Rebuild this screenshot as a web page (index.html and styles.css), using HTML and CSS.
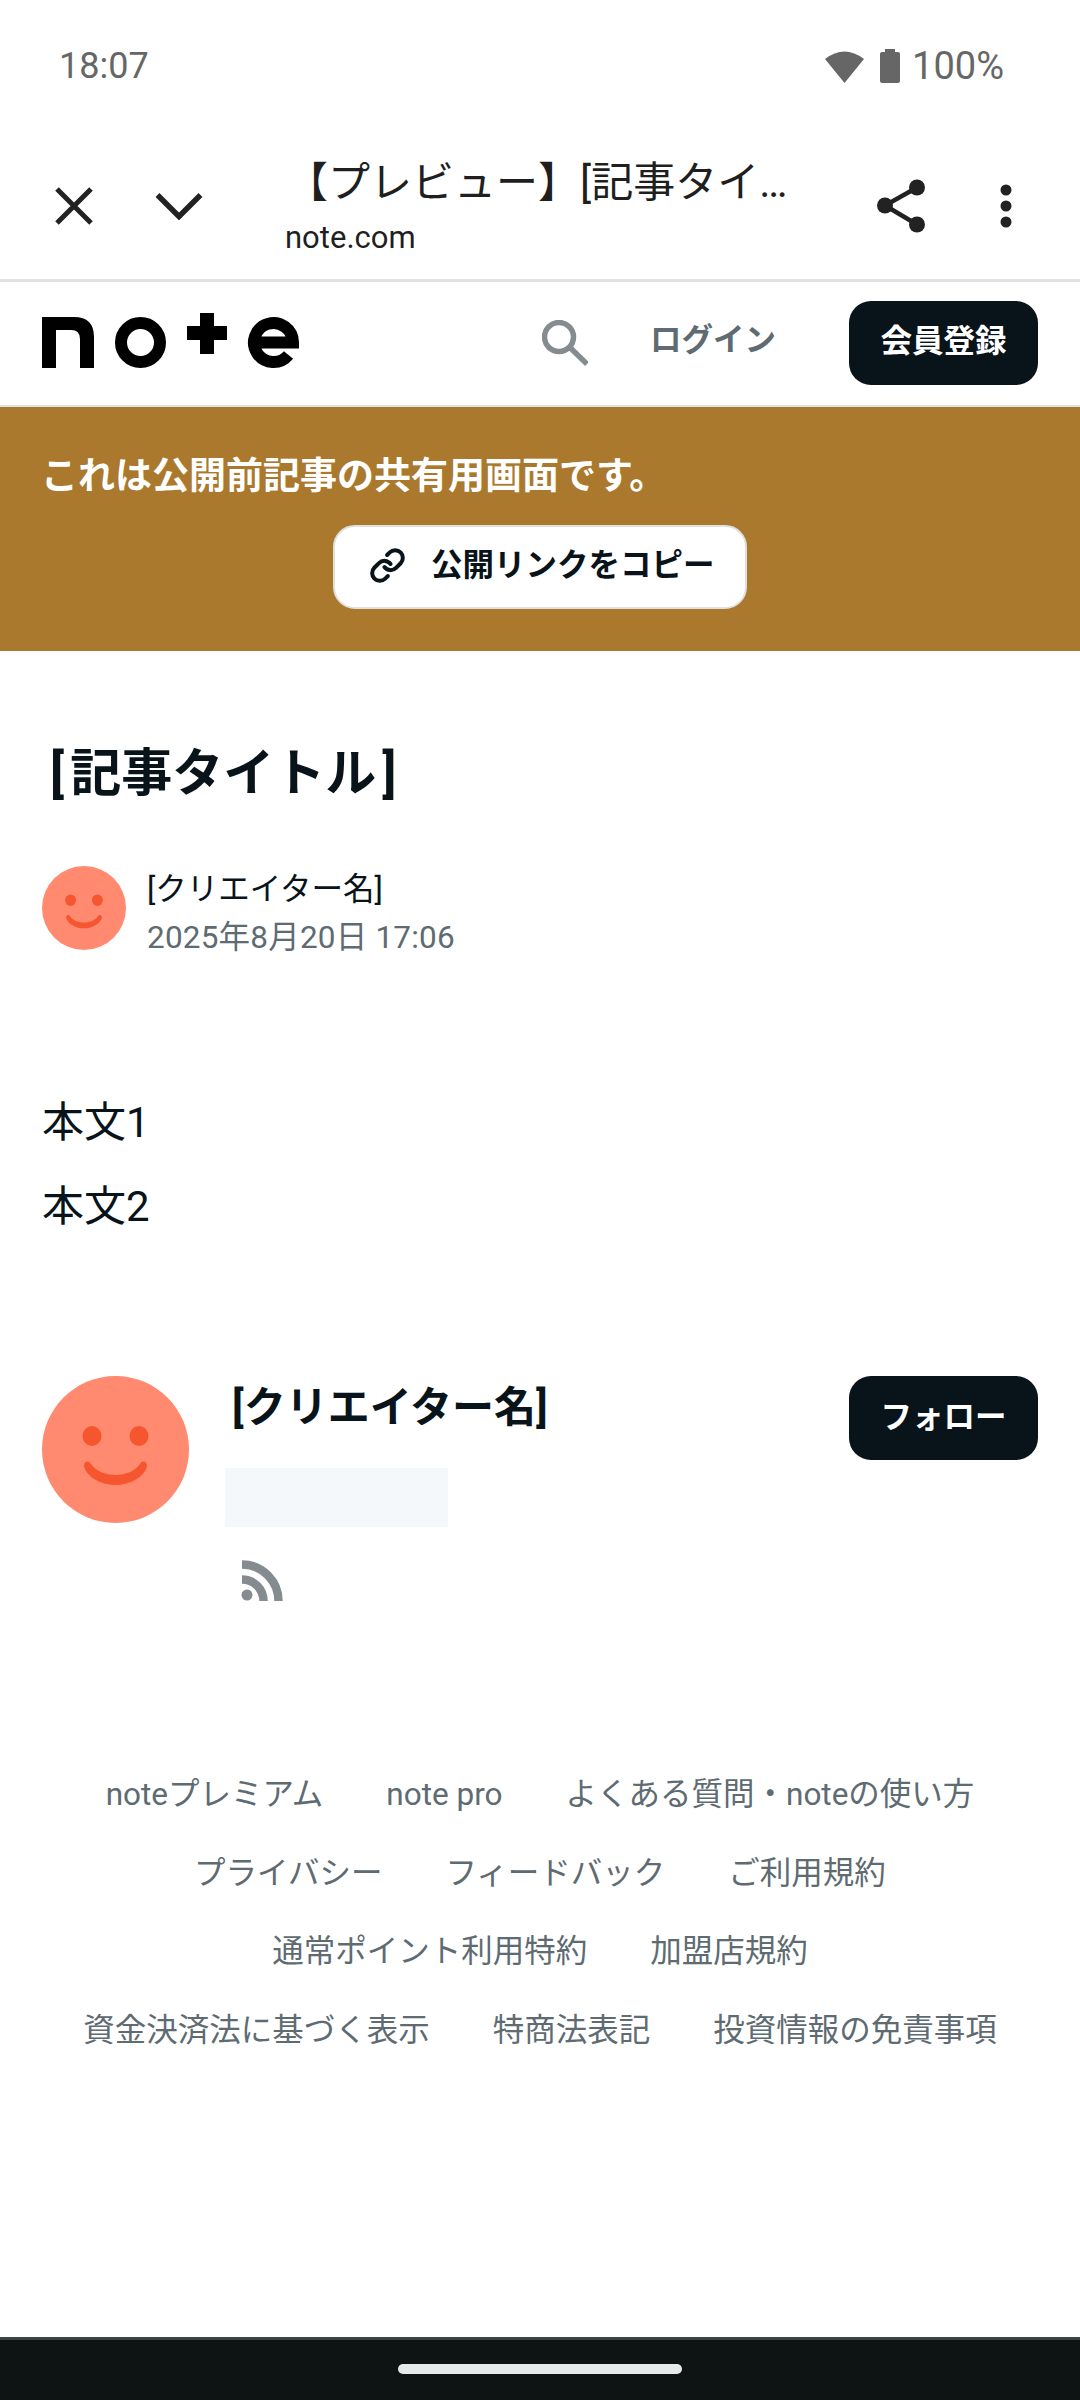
FILE: index.html
```html
<!DOCTYPE html>
<html lang="ja">
<head>
  <meta charset="UTF-8">
  <meta name="viewport" content="width=device-width, initial-scale=1.0">
  <title>【プレビュー】[記事タイトル]</title>
  <link rel="stylesheet" href="styles.css">
</head>
<body>
  <div class="status-bar">
    <span class="status-time">18:07</span>
    <div class="status-icons">
      <svg class="wifi-icon" viewBox="0 0 39 33"><path d="M0 9Q19.500-6 39 9L19.500 33Z"/></svg>
      <svg class="battery-icon" viewBox="0 0 20 34"><path d="M5 0h10v3h3a2 2 0 0 1 2 2v27a2 2 0 0 1-2 2H2a2 2 0 0 1-2-2V5a2 2 0 0 1 2-2h3Z"/></svg>
      <span class="status-battery">100%</span>
    </div>
  </div>

  <div class="browser-bar">
    <svg class="close-icon" viewBox="0 0 40 40"><path d="M3 3 37 37M37 3 3 37"/></svg>
    <svg class="chevron-icon" viewBox="0 0 48 28"><path d="M2.500 3 24 24.500 45.500 3"/></svg>
    <div class="browser-title">
      <div class="page-title">【プレビュー】[記事タイ…</div>
      <div class="page-host">note.com</div>
    </div>
    <svg class="share-icon" viewBox="0 0 48 56">
      <path d="M40 9.500 8 27.500 40 46.500"/>
      <circle cx="40" cy="9.500" r="8"/>
      <circle cx="8" cy="27.500" r="8"/>
      <circle cx="40" cy="46.500" r="8"/>
    </svg>
    <svg class="more-icon" viewBox="0 0 14 46">
      <circle cx="7" cy="7" r="5.500"/>
      <circle cx="7" cy="23" r="5.500"/>
      <circle cx="7" cy="39" r="5.500"/>
    </svg>
  </div>

  <header class="site-header">
    <svg class="logo" viewBox="0 0 258 56">
      <path d="M0 4h32q20 0 20 20v31H38V26q0-9-9-9H14v38H0Z"/>
      <circle class="logo-stroke" cx="98.500" cy="29.500" r="19.500"/>
      <path d="M158 0h14v13h13v14h-13v14h-14V27h-13V13h13Z"/>
      <path class="logo-stroke" d="M212 29.500H251A19.500 19.500 0 1 0 246.500 42"/>
    </svg>
    <svg class="search-icon" viewBox="0 0 46 46"><circle cx="17" cy="17" r="14.500"/><path d="M28.500 28 45 44"/></svg>
    <span class="login-link">ログイン</span>
    <button class="dark-button signup-button">会員登録</button>
  </header>

  <div class="preview-banner">
    <p class="banner-text">これは公開前記事の共有用画面です。</p>
    <button class="copy-button">
      <svg class="link-icon" viewBox="0 0 24 24">
        <path d="M10 13a5 5 0 0 0 7.540.540l3-3a5 5 0 0 0-7.070-7.070l-1.720 1.710"/>
        <path d="M14 11a5 5 0 0 0-7.540-.540l-3 3a5 5 0 0 0 7.070 7.070l1.710-1.710"/>
      </svg>
      <span class="copy-label">公開リンクをコピー</span>
    </button>
  </div>

  <main class="article">
    <h1 class="article-title"><span class="title-open">[</span>記事タイトル<span class="title-close">]</span></h1>

    <div class="byline">
      <svg class="avatar-small" viewBox="0 0 147 147">
        <circle class="face" cx="73.500" cy="73.500" r="73.500"/>
        <ellipse class="feature" cx="50" cy="60" rx="9.500" ry="10"/>
        <ellipse class="feature" cx="97" cy="60" rx="9.500" ry="10"/>
        <path class="feature" d="M42 90C44 100 58 109 73.500 109C89 109 103 100 105 90C105 85 100 84 98 88C93 95 84 99 73.500 99C63 99 54 95 49 88C47 84 42 85 42 90Z"/>
      </svg>
      <div class="byline-text">
        <div class="byline-name">[クリエイター名]</div>
        <div class="byline-date">2025年8月20日 17:06</div>
      </div>
    </div>

    <div class="article-body">
      <p>本文1</p>
      <p>本文2</p>
    </div>

    <div class="creator-card">
      <svg class="avatar-large" viewBox="0 0 147 147">
        <circle class="face" cx="73.500" cy="73.500" r="73.500"/>
        <ellipse class="feature" cx="50" cy="60" rx="9.500" ry="10"/>
        <ellipse class="feature" cx="97" cy="60" rx="9.500" ry="10"/>
        <path class="feature" d="M42 90C44 100 58 109 73.500 109C89 109 103 100 105 90C105 85 100 84 98 88C93 95 84 99 73.500 99C63 99 54 95 49 88C47 84 42 85 42 90Z"/>
      </svg>
      <div class="creator-info">
        <div class="creator-name">[クリエイター名]</div>
        <div class="creator-placeholder"></div>
        <svg class="rss-icon" viewBox="0 0 43 42">
          <circle class="rss-dot" cx="7" cy="35" r="5.500"/>
          <path d="M2 19.500A21.500 21.500 0 0 1 23.500 41"/>
          <path d="M2 4.500A36.500 36.500 0 0 1 38.500 41"/>
        </svg>
      </div>
      <button class="dark-button">フォロー</button>
    </div>

    <nav class="footer-links">
      <span>noteプレミアム</span>
      <span>note pro</span>
      <span>よくある質問・noteの使い方</span>
      <span>プライバシー</span>
      <span>フィードバック</span>
      <span>ご利用規約</span>
      <span>通常ポイント利用特約</span>
      <span>加盟店規約</span>
      <span>資金決済法に基づく表示</span>
      <span>特商法表記</span>
      <span>投資情報の免責事項</span>
    </nav>
  </main>

  <div class="nav-bar"><div class="home-pill"></div></div>
</body>
</html>
```

FILE: styles.css
```css
* { box-sizing: border-box; }
html, body { margin: 0; padding: 0; }
body { width: 1080px; height: 2400px; display: flex; flex-direction: column; overflow: hidden; background: #fff; color: #08131a; font-family: Roboto, "Noto Sans CJK JP", sans-serif; }
p, h1 { margin: 0; }
button { font-family: inherit; border: none; cursor: pointer; }

.status-bar { height: 132px; flex: none; display: flex; justify-content: space-between; align-items: center; padding: 0 76px 0 59px; color: #666; }
.status-time { font-size: 36px; line-height: 1; }
.status-battery { font-size: 38px; line-height: 1; }
.status-icons { display: flex; align-items: center; }
.wifi-icon { width: 39px; height: 33px; fill: #666; margin-right: 16px; }
.battery-icon { width: 20px; height: 34px; fill: #666; margin-right: 12px; }

.browser-bar { height: 150px; flex: none; display: flex; align-items: center; border-bottom: 3px solid #e2e2e2; }
.close-icon { width: 40px; height: 40px; margin-left: 54px; fill: none; stroke: #222; stroke-width: 5; }
.chevron-icon { width: 48px; height: 28px; margin-left: 61px; fill: none; stroke: #222; stroke-width: 5.500; }
.browser-title { width: 551px; margin: 3px 0 0 83px; }
.page-title { font-size: 42px; line-height: 60px; color: #1f1f1f; white-space: nowrap; }
.page-host { margin: 1px 0 0 -1px; font-size: 31px; line-height: 48px; color: #1f1f1f; }
.share-icon { width: 48px; height: 56px; margin-left: 40px; stroke: #222; stroke-width: 4.500; fill: none; }
.share-icon circle { fill: #222; stroke: none; }
.more-icon { width: 14px; height: 46px; margin-left: 74px; fill: #222; }

.site-header { height: 125px; flex: none; display: flex; align-items: center; padding: 0 42px 2px; border-bottom: 2px solid #e2e2e2; }
.logo { width: 258px; height: 56px; fill: #000; margin-top: -3px; }
.logo-stroke { fill: none; stroke: #000; stroke-width: 12; }
.search-icon { width: 46px; height: 46px; margin-left: 242px; fill: none; stroke: #858c90; stroke-width: 5.500; }
.login-link { margin-left: 62px; padding-bottom: 12px; font-size: 31.500px; font-weight: 700; color: #5e6b72; }
.dark-button { width: 189px; height: 84px; flex: none; margin-left: auto; padding: 0 0 9px; background: #08131a; color: #fff; border-radius: 22px; font-size: 31.500px; font-weight: 700; }
.signup-button { padding-bottom: 10px; }

.preview-banner { height: 244px; flex: none; background: #aa792d; padding: 46px 41px 0; display: flex; flex-direction: column; align-items: center; }
.banner-text { align-self: flex-start; padding-top: 2px; color: #fff; font-size: 37px; line-height: 44px; font-weight: 700; }
.copy-button { display: flex; align-items: center; gap: 25px; width: 414px; height: 84px; margin-top: 26px; padding: 0 0 0 34px; background: #fff; border: 2px solid #e0e0e0; border-radius: 22px; color: #08131a; font-size: 31.500px; font-weight: 700; }
.copy-label { padding-bottom: 11px; }
.link-icon { width: 37px; height: 37px; flex: none; margin-bottom: 4px; fill: none; stroke: #08131a; stroke-width: 2.600; stroke-linecap: round; stroke-linejoin: round; }

.article { flex: 1; padding: 0 42px; }
.article-title { font-size: 51px; line-height: 72px; font-weight: 700; margin-top: 87px; padding-left: 8px; }
.title-open { margin-right: 6px; }
.title-close { margin-left: 6px; }

.byline { display: flex; align-items: center; gap: 21px; height: 84px; margin-top: 56px; }
.avatar-small { width: 84px; height: 84px; flex: none; }
.face { fill: #ff8a6f; }
.feature { fill: #f5552f; }
.byline-text { padding-top: 11px; }
.byline-name { font-size: 31.500px; line-height: 44px; color: #08131a; }
.byline-date { font-size: 31.500px; line-height: 44px; letter-spacing: 0.200px; color: #5e6b72; margin-top: 4px; }

.article-body { margin-top: 143px; font-size: 42px; line-height: 60px; }
.article-body p { margin-bottom: 24px; }

.creator-card { display: flex; align-items: flex-start; margin-top: 139px; }
.avatar-large { width: 147px; height: 147px; flex: none; }
.creator-info { margin-left: 36px; }
.creator-name { font-size: 42px; line-height: 60px; font-weight: 700; margin: 2px 0 0 7px; }
.creator-placeholder { width: 223px; height: 59px; margin-top: 30px; background: #f5f8fa; }
.rss-icon { display: block; width: 43px; height: 42px; margin: 33px 0 0 15px; fill: none; stroke: #858c90; stroke-width: 8.500; }
.rss-dot { fill: #858c90; stroke: none; }

.footer-links { width: 930px; margin: 169px auto 0; display: flex; flex-wrap: wrap; justify-content: center; column-gap: 63px; row-gap: 30.500px; font-size: 31.500px; line-height: 48px; color: #5e6b72; }

.nav-bar { height: 63px; flex: none; display: flex; justify-content: center; padding-top: 24px; background: #0e1313; border-top: 3px solid #3a4442; }
.home-pill { width: 284px; height: 10px; border-radius: 5px; background: #e8eaea; }
```
